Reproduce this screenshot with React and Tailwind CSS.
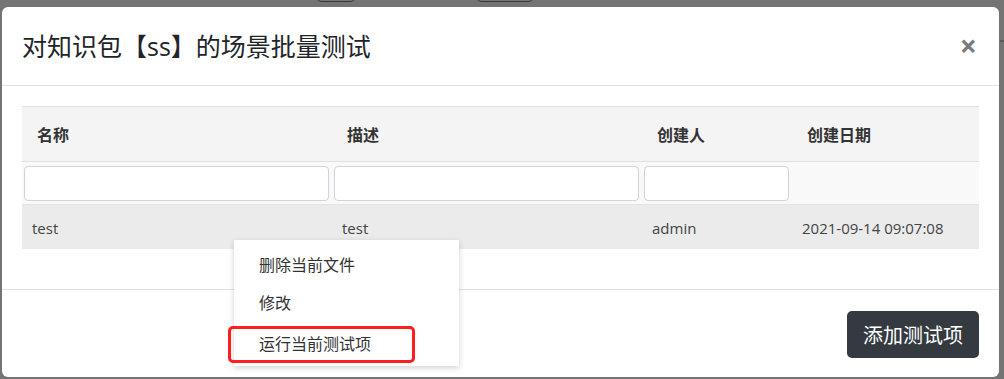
const cols = ['名称', '描述', '创建人', '创建日期']

export default function App() {
  return (
    <div className="relative h-[379px] w-[1004px] overflow-hidden bg-[#747474] pt-[7px] pl-[2px]" style={{ fontFamily: '"Open Sans", "Noto Sans CJK SC", sans-serif' }}>
      {/* bits of the page behind the backdrop */}
      <div className="absolute left-[317px] top-[-6px] h-[8px] w-[38px] rounded-sm border border-[#3a3a3a]" />
      <div className="absolute left-[477px] top-[-6px] h-[8px] w-[56px] rounded-sm border border-[#3a3a3a]" />
      <div className="absolute right-0 top-[40px] h-[2px] w-[4px] bg-[#5a5a5a]" />

      <div className="flex h-[370px] w-[997px] flex-col rounded-[6px] bg-white">
        <div className="flex h-[79px] shrink-0 items-center justify-between border-b border-[#e2e2e2] pl-[20px] pr-[22px]">
          <h1 className="pt-[1px] text-[25px] text-[#212529]" style={{ fontFamily: '"Noto Sans CJK SC", sans-serif' }}>
            对知识包【<span style={{ fontFamily: '"Open Sans", sans-serif' }}>ss</span>】的场景批量测试
          </h1>
          <span className="text-[30px] font-bold leading-none text-[#7a7a7a]">×</span>
        </div>

        <div className="h-[203px] shrink-0 px-[20px] pt-[20px]">
          <table className="w-full table-fixed border-collapse text-[15px] text-[#444]">
            <colgroup>
              <col className="w-[310px]" />
              <col className="w-[310px]" />
              <col className="w-[150px]" />
              <col className="w-[187px]" />
            </colgroup>
            <thead>
              <tr className="h-[55px] border-t border-[#dee2e6] bg-[#f4f4f4]">
                {cols.map((c) => (
                  <th key={c} className="pl-[15px] text-left text-[16px] font-bold text-[#333]" style={{ fontFamily: '"Noto Sans CJK SC", sans-serif' }}>
                    {c}
                  </th>
                ))}
              </tr>
              <tr className="h-[43px] border-t border-[#e0e0e0] bg-[#f9f9f9]">
                {[0, 1, 2].map((i) => (
                  <td key={i} className="pl-[2px] pr-[3px]">
                    <div className="h-[35px] rounded-[4px] border border-[#ced4da] bg-white" />
                  </td>
                ))}
                <td />
              </tr>
            </thead>
            <tbody>
              <tr className="h-[44px] border-t border-[#e3e3e3] bg-[#ebebeb]">
                <td className="pl-[10px] pt-[2px]">test</td>
                <td className="pl-[10px] pt-[2px]">test</td>
                <td className="pl-[10px] pt-[2px]">admin</td>
                <td className="pl-[10px] pt-[2px]">2021-09-14 09:07:08</td>
              </tr>
            </tbody>
          </table>
        </div>

        <div className="flex flex-1 items-start justify-end border-t border-[#e2e2e2] pr-[20px] pt-[21px]">
          <button className="h-[47px] w-[132px] rounded-[5px] bg-[#343a40] text-[20px] text-white" style={{ fontFamily: '"Noto Sans CJK SC", sans-serif' }}>
            添加测试项
          </button>
        </div>
      </div>

      {/* context menu */}
      <div className="absolute left-[234px] top-[240px] flex h-[126px] w-[225px] flex-col pt-[5px] bg-white text-[16px] text-[#333] shadow-[0_2px_6px_rgba(0,0,0,0.18)]" style={{ fontFamily: '"Noto Sans CJK SC", sans-serif' }}>
        <div className="flex h-[38px] items-center pl-[25px]">删除当前文件</div>
        <div className="flex h-[38px] items-center pl-[25px]">修改</div>
        <div className="flex h-[46px] items-center pl-[25px]">运行当前测试项</div>
      </div>
      <div className="absolute left-[228px] top-[326px] h-[37px] w-[187px] rounded-[5px] border-[3px] border-[#ff1e1e]" />
    </div>
  )
}
